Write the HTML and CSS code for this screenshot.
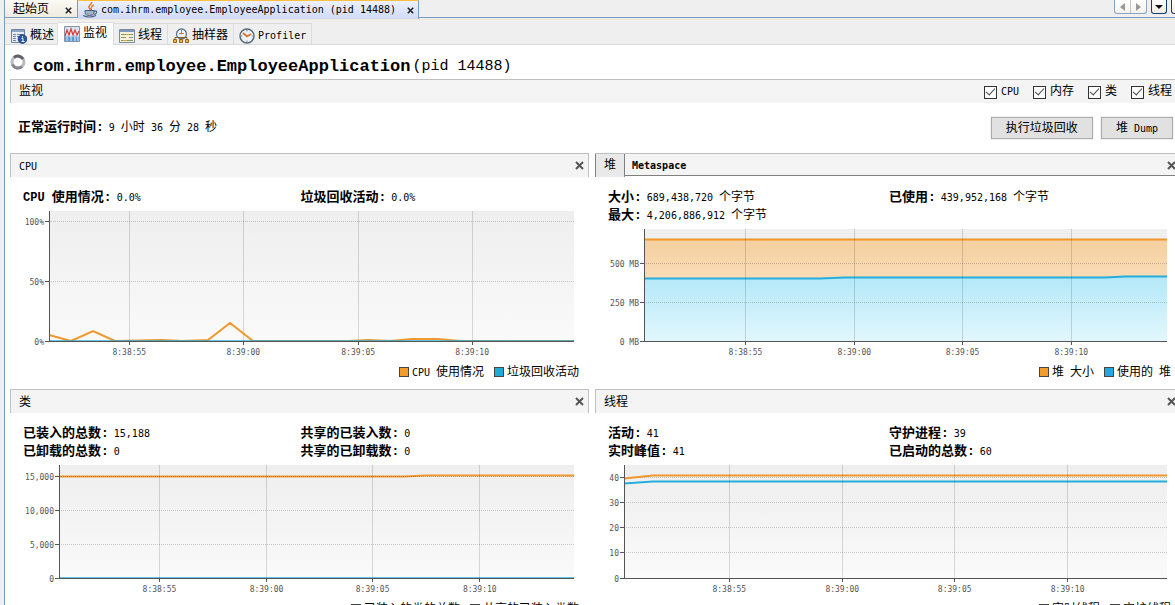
FILE: index.html
```html
<!DOCTYPE html>
<html lang="zh-CN">
<head>
<meta charset="utf-8">
<title>com.ihrm.employee.EmployeeApplication</title>
<link rel="stylesheet" href="styles.css">
</head>
<body>
<svg class="defs" aria-hidden="true">
  <defs>
    <linearGradient id="bg" x1="0" y1="0" x2="0" y2="1"><stop offset="0" stop-color="#eeeeee"/><stop offset="1" stop-color="#fafafa"/></linearGradient>
    <linearGradient id="orange" x1="0" y1="0" x2="0" y2="1"><stop offset="0" stop-color="#f5cf9e"/><stop offset="1" stop-color="#fdf0df"/></linearGradient>
    <linearGradient id="blue" x1="0" y1="0" x2="0" y2="1"><stop offset="0" stop-color="#b3e8f8"/><stop offset="1" stop-color="#e2f7fd"/></linearGradient>
    <symbol id="close" viewBox="0 0 9 9"><path d="M1 1L8 8M8 1L1 8" fill="none" stroke="currentColor" stroke-width="2"/></symbol>
  </defs>
</svg>
<div class="app">
  <nav class="documents">
    <div class="doc">起始页<button class="x" aria-label="关闭"><svg width="7" height="7"><use href="#close"/></svg></button></div>
    <div class="doc doc-active">
      <svg class="java" width="16" height="16" viewBox="0 0 16 16" fill="none">
        <path d="M9.500 0C10.500 2 6 3.500 7 5.500C7.500 6.500 8 7 8 8M12 3C9 4.500 8.500 5.500 9.500 8" stroke="#e8791c" stroke-width="1.500"/>
        <path d="M3 8.500h9v3q-1 2-4.500 2T3 11.500z" fill="#9fb4c8" stroke="#48637f"/>
        <path d="M12 9q3-.5 2.500 1.500T12 12.500M1 13.500q6 3 13 0" stroke="#48637f" stroke-width="1.200"/>
      </svg>
      <span class="n">com.ihrm.employee.EmployeeApplication (pid 14488)</span>
      <button class="x" aria-label="关闭"><svg width="7" height="7"><use href="#close"/></svg></button>
    </div>
    <div class="doc-rest">
      <div class="pair"><button aria-label="向左"><svg width="5" height="8"><path d="M5 0v8L0 4z" fill="#999"/></svg></button><button aria-label="向右"><svg width="5" height="8"><path d="M0 0v8L5 4z" fill="#999"/></svg></button></div>
      <button class="nav" aria-label="列表"><svg width="8" height="4"><path d="M0 0h8L4 4z" fill="#111"/></svg></button>
      <button class="nav" aria-label="最大化"></button>
    </div>
  </nav>
  <nav class="views">
    <button class="view view-first">
      <svg width="16" height="16" viewBox="0 0 16 16"><path d="M.5 1.500h13v13H.5z" fill="#e7edf5" stroke="#6c82a0"/><path d="M1 2h12v2H1z" fill="#8ea6c4"/><path d="M2 6.500h3M6 6.500h6M2 8.500h3M6 8.500h4M2 10.500h3M2 12.500h3" stroke="#6e87a7"/><circle cx="11.500" cy="11" r="4.300" fill="#2858a6" stroke="#183f7d"/><path d="M11.500 8v1.500M10.500 10.500h1.500v3M10.500 13.500h3" stroke="#fff" fill="none"/></svg>概述</button>
    <button class="view view-active">
      <svg width="16" height="16" viewBox="0 0 16 16"><path d="M.5.5h15v15H.5z" fill="#d8e4f2" stroke="#8794a8"/><path d="M1 15v-4l2-2 2 2 2-1 2 1 2-2 2 2 2-1v5z" fill="#5c9bd5"/><path d="M1 10l2-6 2 5 2-6 2 6 2-5 2 5 2-4" stroke="#d83a3a" stroke-width="1.200" fill="none"/><path d="M3 15V8M7 15V9M11 15V8M14 15v-5" stroke="#e6eef8" fill="none"/></svg>监视</button>
    <button class="view">
      <svg width="16" height="16" viewBox="0 0 16 16"><path d="M.5 1.500h15v13H.5z" fill="#f4f1d8" stroke="#7a8aa0"/><path d="M1 2h14v2H1z" fill="#7e99bb"/><path d="M2 6.500h12M2 9.500h5M10 9.500h4M2 12.500h12" stroke="#7d9c6b"/><path d="M7 6.500h3M4 12.500h4" stroke="#d9a633"/></svg>线程</button>
    <button class="view">
      <svg width="16" height="16" viewBox="0 0 16 16"><circle cx="8.500" cy="6" r="5" fill="#eef3f8" stroke="#61758e" stroke-width="1.300"/><path d="M8.500 2v4.500M6 5.500h5" stroke="#d97c2b"/><path d="M2 12V9.500h12V12M8 9.500V12" stroke="#806020" fill="none"/><path d="M.5 11.500h3v3h-3zM6.500 11.500h3v3h-3zM12.500 11.500h3v3h-3z" fill="#f1b54b" stroke="#976413"/></svg>抽样器</button>
    <button class="view">
      <svg width="16" height="16" viewBox="0 0 16 16"><circle cx="8" cy="8" r="7" fill="#edf3f8" stroke="#596b7e" stroke-width="1.500"/><path d="M8 2v1.500M8 12.500V14M2 8h1.500M12.500 8H14" stroke="#7b8ea3"/><path d="M4 5l4 3.500L12 6" stroke="#e06f2c" stroke-width="1.800" fill="none"/></svg><span class="n">Profiler</span></button>
  </nav>
  <main class="content">
    <header class="title">
      <svg width="16" height="16" viewBox="0 0 16 16" fill="none" stroke-width="3"><circle cx="8" cy="8" r="6" stroke="#b9b9c0"/><path d="M4 3.500A6 6 0 0 1 13 5" stroke="#62626c"/><path d="M2.500 10.500A6 6 0 0 0 12 12.500" stroke="#85858e"/></svg>
      <h1>com.ihrm.employee.EmployeeApplication</h1><span class="pid">(pid 14488)</span>
    </header>
    <section class="monitor-bar">
      <span>监视</span>
      <div class="checks">
        <label><input type="checkbox" checked><span class="n">CPU</span></label>
        <label><input type="checkbox" checked>内存</label>
        <label><input type="checkbox" checked>类</label>
        <label><input type="checkbox" checked>线程</label>
      </div>
    </section>
    <section class="uptime">
      <div><b>正常运行时间:</b><span class="n">9 </span>小时<span class="n"> 36 </span>分<span class="n"> 28 </span>秒</div>
      <div class="actions"><button>执行垃圾回收</button><button>堆<span class="n"> Dump</span></button></div>
    </section>
    <div class="panels">
      <section class="panel">
        <header class="head"><span class="n">CPU</span><button class="x" aria-label="关闭"><svg width="9" height="9"><use href="#close"/></svg></button></header>
        <div class="info"><div><b><span class="bn">CPU </span>使用情况:</b><span class="n">0.0%</span></div><div><b>垃圾回收活动:</b><span class="n">0.0%</span></div></div>
        <svg class="chart chart-cpu">
          <rect width="100%" height="130" fill="url(#bg)"/>
          <g class="grid"><line x2="100%" y1="10.500" y2="10.500"/><line x2="100%" y1="70.500" y2="70.500"/></g>
          <g class="vert"><line x1="15.300%" x2="15.300%" y2="130"/><line x1="37%" x2="37%" y2="130"/><line x1="58.900%" x2="58.900%" y2="130"/><line x1="80.600%" x2="80.600%" y2="130"/></g>
          <svg class="series" height="130" viewBox="0 0 525 130" preserveAspectRatio="none">
            <path class="o" d="M0 124L22 130L44 120L66 130L113 129L133 130L159 129L181 112L204 130H300L319 129L341 130L363 128H389L411 130H525"/>
            <path class="b thin" d="M0 129.500H525"/>
          </svg>
          <g class="axis"><path d="M.5 0V130M-4 10.500H0M-4 70.500H0M-4 130.500H0"/><line y1="130.500" x2="100%" y2="130.500"/><line x1="15.300%" x2="15.300%" y1="130" y2="134"/><line x1="37%" x2="37%" y1="130" y2="134"/><line x1="58.900%" x2="58.900%" y1="130" y2="134"/><line x1="80.600%" x2="80.600%" y1="130" y2="134"/></g>
          <g class="yl"><text x="-5" y="14">100%</text><text x="-5" y="74">50%</text><text x="-5" y="134">0%</text></g>
          <g class="xl"><text x="15.300%" y="144">8:38:55</text><text x="37%" y="144">8:39:00</text><text x="58.900%" y="144">8:39:05</text><text x="80.600%" y="144">8:39:10</text></g>
        </svg>
        <footer class="legend"><span><i class="key"></i><span class="n">CPU </span>使用情况</span><span><i class="key key-b"></i>垃圾回收活动</span></footer>
      </section>
      <section class="panel">
        <header class="head head-tabs"><button class="tab tab-on">堆</button><button class="tab"><span class="n strong">Metaspace</span></button><button class="x" aria-label="关闭"><svg width="9" height="9"><use href="#close"/></svg></button></header>
        <div class="info"><div><b>大小:</b><span class="n">689,438,720 </span>个字节</div><div><b>已使用:</b><span class="n">439,952,168 </span>个字节</div><div><b>最大:</b><span class="n">4,206,886,912 </span>个字节</div></div>
        <svg class="chart chart-heap">
          <rect width="100%" height="112" fill="#efefef"/>
          <svg class="series" height="112" viewBox="0 0 523 112" preserveAspectRatio="none">
            <path fill="url(#orange)" d="M0 10.500H523V112H0z"/>
            <path fill="url(#blue)" d="M0 49.500H176L201 48.500H461L481 47.500H523V112H0z"/>
            <path class="o" d="M0 10.500H523"/><path class="b" d="M0 49.500H176L201 48.500H461L481 47.500H523"/>
          </svg>
          <g class="grid"><line x2="100%" y1="34.500" y2="34.500"/><line x2="100%" y1="73.500" y2="73.500"/></g>
          <g class="vert"><line x1="19.400%" x2="19.400%" y2="112"/><line x1="40.200%" x2="40.200%" y2="112"/><line x1="60.900%" x2="60.900%" y2="112"/><line x1="81.700%" x2="81.700%" y2="112"/></g>
          <g class="axis"><path d="M.5 0V112M-4 34.500H0M-4 73.500H0M-4 112.500H0"/><line y1="112.500" x2="100%" y2="112.500"/><line x1="19.400%" x2="19.400%" y1="112" y2="116"/><line x1="40.200%" x2="40.200%" y1="112" y2="116"/><line x1="60.900%" x2="60.900%" y1="112" y2="116"/><line x1="81.700%" x2="81.700%" y1="112" y2="116"/></g>
          <g class="yl"><text x="-5" y="38">500 MB</text><text x="-5" y="77">250 MB</text><text x="-5" y="116">0 MB</text></g>
          <g class="xl"><text x="19.400%" y="126">8:38:55</text><text x="40.200%" y="126">8:39:00</text><text x="60.900%" y="126">8:39:05</text><text x="81.700%" y="126">8:39:10</text></g>
        </svg>
        <footer class="legend"><span><i class="key"></i>堆<span class="n"> </span>大小</span><span><i class="key key-b"></i>使用的<span class="n"> </span>堆</span></footer>
      </section>
      <section class="panel">
        <header class="head"><span>类</span><button class="x" aria-label="关闭"><svg width="9" height="9"><use href="#close"/></svg></button></header>
        <div class="info"><div><b>已装入的总数:</b><span class="n">15,188</span></div><div><b>共享的已装入数:</b><span class="n">0</span></div><div><b>已卸载的总数:</b><span class="n">0</span></div><div><b>共享的已卸载数:</b><span class="n">0</span></div></div>
        <svg class="chart chart-classes">
          <rect width="100%" height="113" fill="url(#bg)"/>
          <svg class="series" height="113" viewBox="0 0 515 113" preserveAspectRatio="none">
            <path class="o" d="M0 11.500H346L366 10.500H515"/><path class="b thin" d="M0 112.500H515"/>
          </svg>
          <g class="grid"><line x2="100%" y1="11.500" y2="11.500"/><line x2="100%" y1="45.500" y2="45.500"/><line x2="100%" y1="79.500" y2="79.500"/></g>
          <g class="vert"><line x1="19.500%" x2="19.500%" y2="113"/><line x1="40.300%" x2="40.300%" y2="113"/><line x1="60.900%" x2="60.900%" y2="113"/><line x1="81.700%" x2="81.700%" y2="113"/></g>
          <g class="axis"><path d="M.5 0V113M-4 11.500H0M-4 45.500H0M-4 79.500H0M-4 113.500H0"/><line y1="113.500" x2="100%" y2="113.500"/><line x1="19.500%" x2="19.500%" y1="113" y2="117"/><line x1="40.300%" x2="40.300%" y1="113" y2="117"/><line x1="60.900%" x2="60.900%" y1="113" y2="117"/><line x1="81.700%" x2="81.700%" y1="113" y2="117"/></g>
          <g class="yl"><text x="-5" y="15">15,000</text><text x="-5" y="49">10,000</text><text x="-5" y="83">5,000</text><text x="-5" y="117">0</text></g>
          <g class="xl"><text x="19.500%" y="127">8:38:55</text><text x="40.300%" y="127">8:39:00</text><text x="60.900%" y="127">8:39:05</text><text x="81.700%" y="127">8:39:10</text></g>
        </svg>
        <footer class="legend"><span><i class="key"></i>已装入的类的总数</span><span><i class="key key-b"></i>共享的已装入类数</span></footer>
      </section>
      <section class="panel">
        <header class="head"><span>线程</span><button class="x" aria-label="关闭"><svg width="9" height="9"><use href="#close"/></svg></button></header>
        <div class="info"><div><b>活动:</b><span class="n">41</span></div><div><b>守护进程:</b><span class="n">39</span></div><div><b>实时峰值:</b><span class="n">41</span></div><div><b>已启动的总数:</b><span class="n">60</span></div></div>
        <svg class="chart chart-threads">
          <rect width="100%" height="113" fill="url(#bg)"/>
          <g class="grid"><line x2="100%" y1="12.500" y2="12.500"/><line x2="100%" y1="37.500" y2="37.500"/><line x2="100%" y1="62.500" y2="62.500"/><line x2="100%" y1="87.500" y2="87.500"/></g>
          <svg class="series" height="113" viewBox="0 0 543 113" preserveAspectRatio="none">
            <path class="o" d="M0 13.500L29 10.500H543"/><path class="b" d="M0 18.500L29 16.500H543"/>
          </svg>
          <g class="vert"><line x1="19.400%" x2="19.400%" y2="113"/><line x1="40.200%" x2="40.200%" y2="113"/><line x1="60.900%" x2="60.900%" y2="113"/><line x1="81.700%" x2="81.700%" y2="113"/></g>
          <g class="axis"><path d="M.5 0V113M-4 12.500H0M-4 37.500H0M-4 62.500H0M-4 87.500H0M-4 113.500H0"/><line y1="113.500" x2="100%" y2="113.500"/><line x1="19.400%" x2="19.400%" y1="113" y2="117"/><line x1="40.200%" x2="40.200%" y1="113" y2="117"/><line x1="60.900%" x2="60.900%" y1="113" y2="117"/><line x1="81.700%" x2="81.700%" y1="113" y2="117"/></g>
          <g class="yl"><text x="-5" y="16">40</text><text x="-5" y="41">30</text><text x="-5" y="66">20</text><text x="-5" y="91">10</text><text x="-5" y="117">0</text></g>
          <g class="xl"><text x="19.400%" y="127">8:38:55</text><text x="40.200%" y="127">8:39:00</text><text x="60.900%" y="127">8:39:05</text><text x="81.700%" y="127">8:39:10</text></g>
        </svg>
        <footer class="legend"><span><i class="key"></i>实时线程</span><span><i class="key key-b"></i>守护线程</span></footer>
      </section>
    </div>
  </main>
</div>
</body>
</html>
```
FILE: styles.css
```css
* { box-sizing: border-box; }
body {
  margin: 0;
  height: 100vh;
  overflow: hidden;
  background: #efefef;
  color: #000;
  font: 12px/18px "Liberation Mono", "Noto Sans CJK SC", monospace;
}
button { margin: 0; padding: 0; border: 0; background: none; color: inherit; font: inherit; }
.defs { position: absolute; width: 0; height: 0; }
svg { flex: none; }
.n { font-family: "DejaVu Sans Mono", "Noto Sans CJK SC", monospace; font-size: 10px; white-space: pre; }
.bn { font-size: 12px; white-space: pre; }
.strong { font-weight: bold; }
b { margin-right: 5px; font-size: 13px; }
.app { min-height: 100vh; margin-left: 4px; border-left: 1px solid #7a9ac0; }
.x { display: flex; align-items: center; justify-content: center; color: #555; }

.documents { display: flex; height: 20px; border-bottom: 1px solid #ece9d8; }
.doc {
  display: flex;
  align-items: center;
  justify-content: space-between;
  width: 73px;
  height: 18px;
  padding: 3px 5px 0 8px;
  border-right: 1px solid #7a9ac0;
  border-bottom: 1px solid #7a9ac0;
  background: linear-gradient(#fbfaf3, #efece0);
}
.doc .x { color: #222; }
.doc-active {
  justify-content: flex-start;
  gap: 3px;
  width: 341px;
  height: 19px;
  padding: 0 4px;
  border-top: 1px solid #ffc040;
  border-bottom: 0;
  background: linear-gradient(#edf1fc, #d0daf4);
}
.doc-active .x { margin-left: auto; }
.doc-rest {
  display: flex;
  flex: 1;
  align-items: flex-start;
  justify-content: flex-end;
  gap: 4px;
  height: 18px;
  border-bottom: 1px solid #7a9ac0;
  overflow: hidden;
  padding-left: 8px;
  margin-right: -12px;
}
.pair { display: flex; border: 1px solid #8ba6c3; border-top: 0; border-radius: 0 0 3px 3px; background: linear-gradient(#fff, #f2f1ec); }
.pair button { display: flex; align-items: center; justify-content: center; width: 15px; height: 13px; }
.pair button + button { border-left: 1px solid #c5c5c5; width: 16px; }
.nav { display: flex; align-items: center; justify-content: center; width: 16px; height: 14px; border: 1px solid #123f72; border-top: 0; border-radius: 0 0 3px 3px; background: linear-gradient(#fff, #eeece4); }

.views { display: flex; align-items: flex-end; height: 25px; border-bottom: 1px solid #d9d9d9; }
.view { display: flex; align-items: center; gap: 3px; height: 21px; padding: 3px 5px 0 5px; border: 1px solid #dcdcdc; border-left: 0; border-bottom: 0; line-height: 18px; }
.view-first { padding-left: 6px; padding-right: 3px; }
.view-active { height: 23px; margin-bottom: -1px; padding: 0 6px; background: #fff; }

.content { background: #fff; min-height: 560px; }
.title { display: flex; align-items: center; height: 34px; padding: 0 5px; white-space: pre; }
.title h1 { margin: 0 2px 0 7px; font-size: 17px; line-height: 24px; padding-top: 10px; }
.title .pid { font-size: 15px; line-height: 24px; padding-top: 10px; }
.monitor-bar { display: flex; align-items: center; justify-content: space-between; height: 24px; margin-left: 5px; padding: 1px 3px 0 8px; border: 1px solid #c0c0c0; border-width: 1px 0 0 1px; background: #f4f4f4; }
.checks { display: flex; gap: 14px; }
.checks label { display: flex; align-items: center; gap: 4px; }
.checks input { display: flex; align-items: center; justify-content: center; appearance: none; width: 13px; height: 13px; margin: 0; border: 1px solid #333; background: #fff; }
.checks input:checked::after { content: ""; width: 8px; height: 4px; margin-bottom: 3px; border: solid #444; border-width: 0 0 1px 1px; transform: rotate(-48deg); }
.uptime { display: flex; align-items: center; justify-content: space-between; height: 50px; padding: 0 2px 0 13px; }
.actions { display: flex; gap: 8px; }
.actions button { height: 22px; padding: 1px 14px 0; border: 1px solid #adadad; background: #e1e1e1; outline: 1px solid #f0f0f0; line-height: 20px; white-space: nowrap; }

.panels { display: grid; grid-template-columns: 579fr 586fr; column-gap: 6px; row-gap: 7px; margin: 0 -6px 0 5px; }
.panel { min-width: 0; }
.head { display: flex; align-items: center; justify-content: space-between; height: 24px; padding: 0 4px 0 8px; border: 1px solid #c0c0c0; border-bottom: 0; background: #f4f4f4; }
.head > span { padding-top: 2px; }
.head-tabs { justify-content: flex-start; height: 23px; margin-bottom: 1px; padding-left: 0; border-left: 0; box-shadow: inset 0 -1px #808080; }
.head-tabs .x { margin-left: auto; }
.tab { height: 22px; padding: 2px 7px 0; }
.tab-on { height: 23px; padding: 2px 8px 0; border: 1px solid #808080; border-width: 0 1px; background: #e9e9e9; }
.info { display: grid; grid-template-columns: 1fr 1fr; padding: 12px 11px 4px 13px; white-space: nowrap; }
.info > div { height: 18px; }
.chart { display: block; overflow: visible; }
.chart-cpu { width: calc(100% - 54px); height: 152px; margin-left: 39px; }
.chart-heap { width: calc(100% - 63px); height: 134px; margin-left: 49px; }
.chart-classes { width: calc(100% - 64px); height: 135px; margin-left: 49px; }
.chart-threads { width: calc(100% - 43px); height: 135px; margin-left: 29px; }
.series { width: 100%; overflow: hidden; }
.series path { vector-effect: non-scaling-stroke; }
.o, .b { fill: none; stroke-width: 2px; }
.o { stroke: #f0982c; }
.b { stroke: #25aedb; }
.thin { stroke-width: 1px; opacity: 0.7; }
.grid, .vert, .axis { shape-rendering: crispEdges; fill: none; }
.grid { stroke: #00000030; stroke-dasharray: 1 1; }
.vert { stroke: #00000024; }
.axis { stroke: #555; }
.yl, .xl { fill: #555; font-family: "DejaVu Sans Mono", monospace; font-size: 8px; }
.yl { text-anchor: end; }
.xl { text-anchor: middle; }
.legend { display: flex; justify-content: flex-end; gap: 10px; padding: 1px 10px 0 0; white-space: nowrap; }
.legend > span { display: flex; align-items: center; white-space: pre; }
.key { width: 10px; height: 10px; margin: 0 3px 2px 0; border: 1px solid #444; background: #f39c2b; }
.key-b { background: #20a9da; }
```
